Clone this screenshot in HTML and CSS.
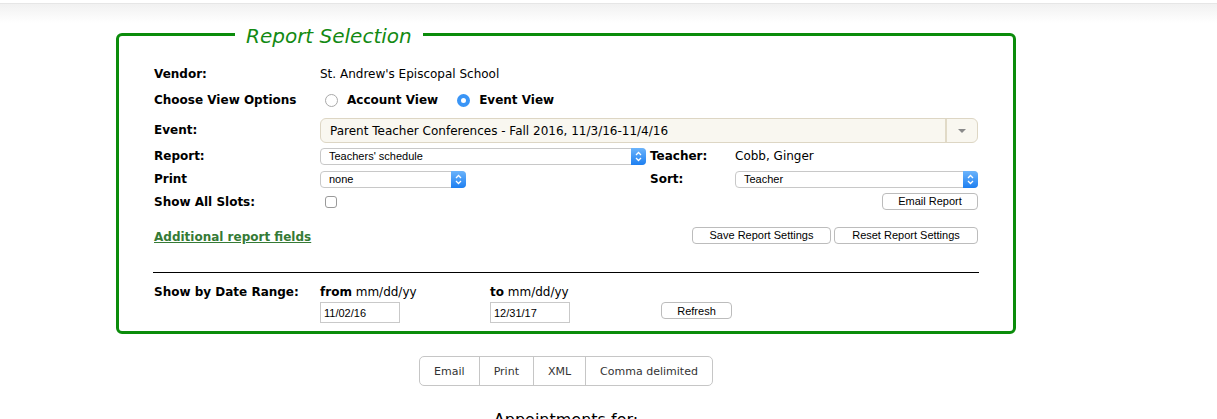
FILE: index.html
```html
<!DOCTYPE html>
<html lang="en">
<head>
    <meta charset="UTF-8">
    <title>Report Selection</title>
    <link rel="stylesheet" href="styles.css">
</head>
<body>
    <div class="topbar"></div>
    <div class="page">
        <fieldset class="selection">
            <legend>Report Selection</legend>
            <div class="grid">
                <div class="lbl">Vendor:</div>
                <div class="span3">St. Andrew's Episcopal School</div>

                <div class="lbl">Choose View Options</div>
                <div class="span3 radios">
                    <span class="radio"></span><span class="rlabel">Account View</span>
                    <span class="radio on"></span><span class="rlabel">Event View</span>
                </div>

                <div class="lbl">Event:</div>
                <div class="span3">
                    <div class="combo">
                        <span class="val">Parent Teacher Conferences - Fall 2016, 11/3/16-11/4/16</span>
                        <span class="drop"><span class="tri"></span></span>
                    </div>
                </div>

                <div class="lbl">Report:</div>
                <div>
                    <div class="select report"><span class="val">Teachers' schedule</span><span class="step"><svg width="9" height="11" viewBox="0 0 9 11"><path d="M2 4 L4.5 1.5 L7 4 M2 7 L4.5 9.5 L7 7" fill="none" stroke="#fff" stroke-width="1.3"/></svg></span></div>
                </div>
                <div class="lbl">Teacher:</div>
                <div>Cobb, Ginger</div>

                <div class="lbl">Print</div>
                <div>
                    <div class="select print"><span class="val">none</span><span class="step"><svg width="9" height="11" viewBox="0 0 9 11"><path d="M2 4 L4.5 1.5 L7 4 M2 7 L4.5 9.5 L7 7" fill="none" stroke="#fff" stroke-width="1.3"/></svg></span></div>
                </div>
                <div class="lbl">Sort:</div>
                <div>
                    <div class="select sort"><span class="val">Teacher</span><span class="step"><svg width="9" height="11" viewBox="0 0 9 11"><path d="M2 4 L4.5 1.5 L7 4 M2 7 L4.5 9.5 L7 7" fill="none" stroke="#fff" stroke-width="1.3"/></svg></span></div>
                </div>

                <div class="lbl">Show All Slots:</div>
                <div><span class="check"></span></div>
                <div></div>
                <div class="right up2"><button class="btn w-email">Email Report</button></div>

                <div class="span2"><a href="#" class="morelink">Additional report fields</a></div>
                <div class="span2 right up4">
                    <button class="btn w-save">Save Report Settings</button>
                    <button class="btn w-reset">Reset Report Settings</button>
                </div>
            </div>

            <hr class="sep">

            <div class="dates">
                <div class="lbl">Show by Date Range:</div>
                <div><b>from</b> mm/dd/yy</div>
                <div><b>to</b> mm/dd/yy</div>
                <div></div>
                <div></div>
                <div><input type="text" class="date" value="11/02/16"></div>
                <div><input type="text" class="date" value="12/31/17"></div>
                <div><button class="btn w-refresh">Refresh</button></div>
            </div>
        </fieldset>

        <div class="exports">
            <div class="group">
                <span>Email</span>
                <span>Print</span>
                <span>XML</span>
                <span>Comma delimited</span>
            </div>
        </div>

        <h3 class="appts">Appointments for:</h3>
    </div>
</body>
</html>
```

FILE: styles.css
```css
body {
    margin: 0;
    font-family: "DejaVu Sans", Verdana, sans-serif;
    font-size: 12px;
    color: #000;
}

.topbar {
    margin-top: 3px;
    height: 19px;
    border-top: 1px solid #e6e6e6;
    background: linear-gradient(#f1f1f1, #fff);
}

.page {
    width: 900px;
    margin-left: 116px;
}

.selection {
    box-sizing: border-box;
    width: 900px;
    margin: -2px 0 0;
    padding: 0 34px 8px 35px;
    border: 3px solid #0b8c0b;
    border-radius: 6px;
}

.selection legend {
    margin-left: 81px;
    padding: 3px 11px 0;
    font-size: 20px;
    line-height: 24px;
    font-style: italic;
    color: #138a13;
}

.grid {
    display: grid;
    grid-template-columns: 166px 330px 85px 243px;
    grid-template-rows: 24px 28px 32px 20px 26px 20px 50px;
    align-items: center;
    margin-top: 14px;
}

.lbl {
    font-weight: bold;
}

.span3 {
    grid-column: span 3;
}

.span2 {
    grid-column: span 2;
}

.right {
    display: flex;
    justify-content: flex-end;
    gap: 3px;
}

.up2 {
    margin-bottom: 2px;
}

.up4 {
    margin-bottom: 4px;
}

.radios {
    display: flex;
    align-items: center;
}

.radio {
    box-sizing: border-box;
    width: 13px;
    height: 13px;
    margin-left: 5px;
    border: 1px solid #a9a9a9;
    border-radius: 50%;
    background: #fff;
}

.radio.on {
    margin-left: 19px;
    border: 4.5px solid #3a95f6;
    background: #fff;
}

.rlabel {
    margin-left: 9px;
    font-weight: bold;
}

.combo {
    box-sizing: border-box;
    display: flex;
    align-items: center;
    height: 25px;
    margin-top: 1px;
    border: 1px solid #ddd6c4;
    border-radius: 6px;
    background: #f9f7f0;
}

.combo .val {
    flex: 1;
    padding-left: 9px;
}

.combo .drop {
    display: flex;
    align-items: center;
    justify-content: center;
    width: 30px;
    height: 100%;
    border-left: 2px solid #e1dac7;
}

.combo .tri {
    width: 0;
    height: 0;
    border-left: 4px solid transparent;
    border-right: 4px solid transparent;
    border-top: 4px solid #8a8a8a;
}

.select {
    box-sizing: border-box;
    display: flex;
    align-items: center;
    height: 17px;
    border: 1px solid #c8c8c8;
    border-radius: 4px;
    background: #fff;
    font-family: "Liberation Sans", Arial, sans-serif;
    font-size: 11px;
}

.select .val {
    flex: 1;
    padding-left: 8px;
}

.select .step {
    display: flex;
    align-items: center;
    justify-content: center;
    align-self: stretch;
    width: 15px;
    margin: -1px -1px -1px 0;
    border-radius: 0 4px 4px 0;
    background: linear-gradient(#6cb4fb, #1d7ff1);
}

.report { width: 326px; }
.print { width: 146px; }
.sort { width: 243px; }

.check {
    display: block;
    box-sizing: border-box;
    width: 12px;
    height: 12px;
    margin-left: 5px;
    border: 1px solid #9a9a9a;
    border-radius: 3px;
    background: #fff;
}

.btn {
    box-sizing: border-box;
    height: 17px;
    padding: 0;
    border: 1px solid #bcbcbc;
    border-radius: 4px;
    background: #fff;
    font-family: "Liberation Sans", Arial, sans-serif;
    font-size: 11px;
    color: #000;
}

.w-email { width: 96px; }
.w-save { width: 139px; }
.w-reset { width: 144px; }
.w-refresh { width: 71px; }

.morelink {
    font-weight: bold;
    color: #357a35;
    text-decoration: underline;
}

.sep {
    margin: 10px 0 0 -1px;
    border: 0;
    border-top: 1px solid #000;
}

.dates {
    display: grid;
    grid-template-columns: 166px 170px 171px auto;
    grid-template-rows: 14px 21px;
    row-gap: 3px;
    margin-top: 12px;
    line-height: 14px;
}

.date {
    box-sizing: border-box;
    width: 80px;
    height: 21px;
    margin: 0;
    padding: 0 0 0 3px;
    border: 1px solid #c9c9c9;
    font-family: "Liberation Sans", Arial, sans-serif;
    font-size: 11px;
}

.exports {
    margin-top: 22px;
    text-align: center;
}

.group {
    display: inline-flex;
    height: 30px;
    border: 1px solid #c6c6c6;
    border-radius: 5px;
    box-sizing: border-box;
    font-size: 11px;
    color: #333;
}

.group span {
    display: flex;
    align-items: center;
    padding: 0 14px;
    border-left: 1px solid #c6c6c6;
}

.group span:first-child {
    border-left: 0;
}

.appts {
    margin: 24px 0 0;
    font-size: 16px;
    font-weight: normal;
    line-height: 20px;
    text-align: center;
}
```
